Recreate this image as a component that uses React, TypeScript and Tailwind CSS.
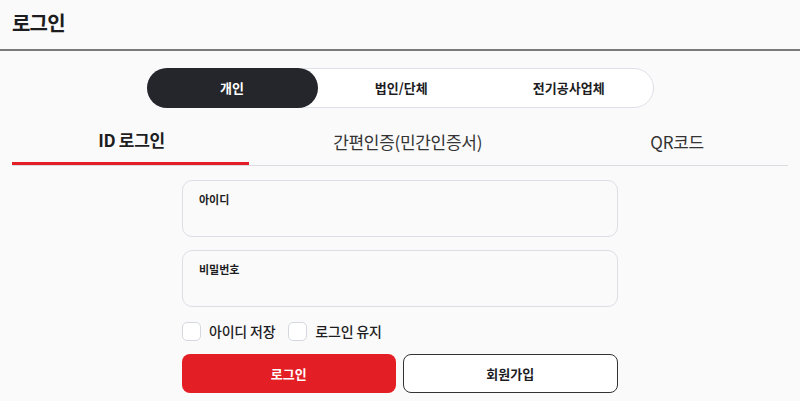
import React from "react";

export default function App() {
  const font = { fontFamily: '"Noto Sans CJK KR", "Noto Sans", sans-serif' };
  return (
    <div className="min-h-[401px] w-[800px] bg-[#fafafa] text-[#1d1d1f]" style={font}>
      <div className="h-[51px] border-b-2 border-[#7a7a7a] flex items-center px-[12px]">
        <h1 className="text-[20px] font-bold tracking-[-0.8px] leading-none pb-[3px]">로그인</h1>
      </div>

      <div className="flex justify-center mt-[17px]">
        <div className="w-[507px] h-[40px] rounded-full border border-[#dfe1e8] bg-white flex items-stretch text-[13px] font-bold">
          <div className="w-[171px] -my-px -ml-px rounded-full bg-[#25262b] text-white flex items-center justify-center">개인</div>
          <div className="flex-1 flex items-center justify-center">법인/단체</div>
          <div className="flex-1 flex items-center justify-center">전기공사업체</div>
        </div>
      </div>

      <div className="mx-[12px] mt-[10px] flex border-b border-[#dcdde2]">
        <div className="flex-auto h-[47px] -mb-px border-b-[3px] border-[#e31e24] flex items-center justify-center text-[17px] font-bold tracking-[-0.3px] pl-[2px]">ID 로그인</div>
        <div className="flex-auto h-[47px] flex items-center justify-center text-[17px] text-[#333] tracking-[-0.3px]">간편인증(민간인증서)</div>
        <div className="flex-auto h-[47px] flex items-center justify-center text-[17px] text-[#333] tracking-[-0.3px]">QR코드</div>
      </div>

      <div className="w-[436px] mx-auto mt-[14px]">
        <div className="h-[57px] rounded-[10px] border border-[#dcdee6] bg-[#fafafa] px-[16px] pt-[11px]">
          <div className="text-[11px] font-bold leading-[14px]">아이디</div>
        </div>
        <div className="h-[57px] mt-[13px] rounded-[10px] border border-[#dcdee6] bg-[#fafafa] px-[16px] pt-[11px]">
          <div className="text-[11px] font-bold leading-[14px]">비밀번호</div>
        </div>

        <div className="flex items-center mt-[14px] h-[20px] text-[14px] font-medium">
          <div className="w-[19px] h-[19px] rounded-[5px] border border-[#d5d8e0] bg-white" />
          <span className="ml-[8px] tracking-[-0.2px]">아이디 저장</span>
          <div className="w-[19px] h-[19px] rounded-[5px] border border-[#d5d8e0] bg-white ml-[13px]" />
          <span className="ml-[8px] tracking-[-0.2px]">로그인 유지</span>
        </div>

        <div className="flex gap-[7px] mt-[13px]">
          <button className="flex-1 h-[39px] rounded-[8px] bg-[#e31e24] text-white text-[13px] font-bold">로그인</button>
          <button className="flex-1 h-[39px] rounded-[8px] border border-[#333] bg-white text-[13px] font-bold">회원가입</button>
        </div>
      </div>
    </div>
  );
}
